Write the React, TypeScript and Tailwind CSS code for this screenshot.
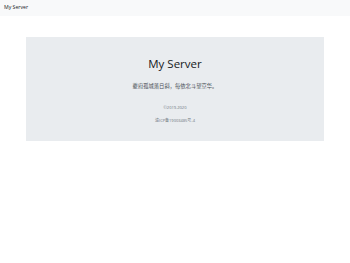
export default function App() {
  return (
    <div className="min-h-[263px] bg-white font-['Open_Sans','Noto_Sans_CJK_SC',sans-serif] text-[#212529]">
      {/* Navbar */}
      <nav className="h-4 bg-[#f8f9fa] flex items-center px-[4px]">
        <span className="text-[5.2px] leading-none text-[#212529]">My Server</span>
      </nav>

      {/* Jumbotron */}
      <div className="mx-[26px] mt-[21px] h-[104px] bg-[#e9ecef] flex flex-col items-center">
        <h1 className="mt-[20px] text-[11.5px] leading-[14px] font-medium text-[#16191c]">My Server</h1>
        <p className="mt-[13px] text-[5.3px] leading-none text-[#495057]">夔府孤城落日斜，每依北斗望京华。</p>
        <p className="mt-[17px] text-[4px] leading-none text-[#6c757d]">©2019-2020</p>
        <p className="mt-[9px] text-[4px] leading-none text-[#6c757d]">渝ICP备19003485号-4</p>
      </div>
    </div>
  )
}
